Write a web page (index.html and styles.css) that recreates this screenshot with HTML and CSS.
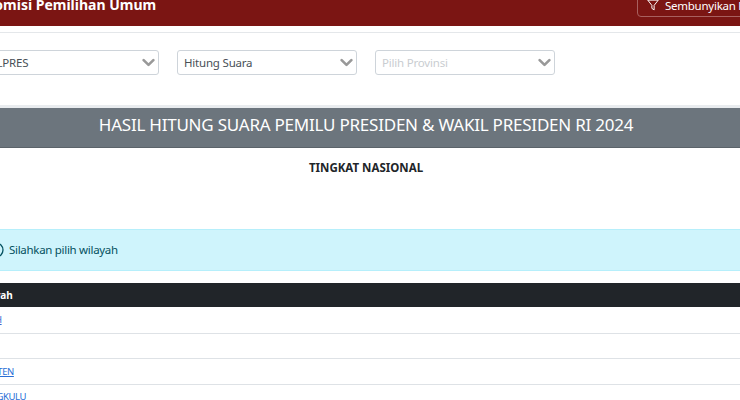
FILE: index.html
```html
<!DOCTYPE html>
<html lang="id">
<head>
  <meta charset="UTF-8">
  <title>Hasil Hitung Suara Pemilu 2024</title>
  <link rel="stylesheet" href="styles.css">
</head>
<body>
  <div class="page">
    <header class="topbar">
      <span class="brand">Komisi Pemilihan Umum</span>
      <button class="btn-filter">
        <svg width="12" height="12" viewBox="0 0 16 16" fill="none" stroke="#fff" stroke-width="1.3" stroke-linejoin="round"><path d="M1 1.5h14L9.5 8.5v6l-3-2v-4z"/></svg>
        <span>Sembunyikan Filter</span>
      </button>
    </header>

    <section class="filters">
      <select class="pilih"><option>PILPRES</option></select>
      <select class="pilih"><option>Hitung Suara</option></select>
      <select class="pilih" disabled><option>Pilih Provinsi</option></select>
    </section>

    <h1 class="judul">HASIL HITUNG SUARA PEMILU PRESIDEN &amp; WAKIL PRESIDEN RI 2024</h1>
    <h2 class="tingkat">TINGKAT NASIONAL</h2>

    <div class="alert">
      <svg width="16" height="16" viewBox="0 0 16 16" fill="none" stroke="#055160" stroke-width="1.3"><circle cx="8" cy="8" r="7"/><path d="M8 7v4M8 4.5v1"/></svg>
      <span>Silahkan pilih wilayah</span>
    </div>

    <table class="wilayah">
      <thead>
        <tr><th>Wilayah</th></tr>
      </thead>
      <tbody>
        <tr><td><a href="#">ACEH</a></td></tr>
        <tr><td><a href="#">BALI</a></td></tr>
        <tr><td><a href="#">BANTEN</a></td></tr>
        <tr><td><a href="#">BENGKULU</a></td></tr>
      </tbody>
    </table>
  </div>
</body>
</html>
```

FILE: styles.css
```css
*{
  box-sizing: border-box;
}
html, body{
  margin: 0; padding: 0;
  height: 400px;
  overflow: hidden;
  background: #fff;
}
body{
  font-family: "Noto Sans", "Open Sans", sans-serif;
  color: #212529;
}
.page{
  margin-left: -21px;
  width: 774px;
}
.topbar{
  display: flex;
  justify-content: space-between;
  align-items: flex-end;
  height: 32px;
  margin-top: -6px;
  padding: 0 0 9px 6px;
  background: #7b1513;
  color: #fff;
}
.brand{
  font-size: 14px;
  font-weight: 700;
  line-height: 20px;
  margin-bottom: 2px;
  white-space: nowrap;
}
.btn-filter{
  display: flex;
  align-items: center;
  gap: 6px;
  flex: none;
  height: 24px;
  width: 170px;
  margin-right: -54px;
  padding: 0 9px;
  background: transparent;
  color: #fff;
  border: 1px solid #a8605f;
  border-radius: 4px;
  font: inherit;
  font-size: 11.5px;
  letter-spacing: -.25px;
  white-space: nowrap;
}
.filters{
  display: flex;
  gap: 18px;
  height: 76px;
  margin-top: 6px;
  padding-top: 17px;
  border-top: 1px solid #e4e7ea;
  border-bottom: 3px solid #e9ecef;
}
.pilih{
  appearance: none;
  width: 180px;
  height: 25px;
  padding: 0 6px;
  background: #fff url("data:image/svg+xml,%3Csvg xmlns='http://www.w3.org/2000/svg' viewBox='0 0 16 16'%3E%3Cpath fill='none' stroke='%23999' stroke-linecap='round' stroke-linejoin='round' stroke-width='3.2' d='M2 5l6 6 6-6'/%3E%3C/svg%3E") no-repeat right 3px center / 13px 13px;
  border: 1px solid #ced4da;
  border-radius: 3px;
  font: inherit;
  font-size: 11.5px;
  letter-spacing: -.2px;
  color: #495057;
}
.pilih:disabled{
  color: #c9cdd1;
  opacity: 1;
}
.judul{
  margin: 0;
  height: 40px;
  line-height: 33px;
  background: #6c757d;
  color: #fff;
  font-size: 17px;
  font-weight: 400;
  letter-spacing: -.23px;
  text-align: center;
  border-bottom: 1px solid #5b636a;
}
.tingkat{
  margin: 12px 0 0;
  font-size: 11.5px;
  line-height: 16px;
  font-weight: 700;
  text-align: center;
  color: #212529;
}
.alert{
  display: flex;
  align-items: center;
  gap: 5px;
  height: 42px;
  margin-top: 53px;
  padding: 0 0 1px 9px;
  background: #cff4fc;
  border-top: 1px solid #b6effb;
  border-bottom: 1px solid #b6effb;
  color: #055160;
  font-size: 11.5px;
  letter-spacing: -.3px;
}
.wilayah{
  width: 100%;
  margin-top: 12px;
  border-collapse: collapse;
  font-size: 9.5px;
}
.wilayah th{
  height: 24px;
  padding: 0;
  background: #212529;
  color: #fff;
  font-size: 10px;
  font-weight: 700;
  letter-spacing: -.2px;
  text-align: left;
  text-indent: -5px;
}
.wilayah td{
  height: 26px;
  padding: 0;
  letter-spacing: -.4px;
  border-bottom: 1px solid #dee2e6;
}
.wilayah tr:nth-child(even) td{
  height: 25px;
}
.wilayah a{
  color: #2a6fd6;
}
```
